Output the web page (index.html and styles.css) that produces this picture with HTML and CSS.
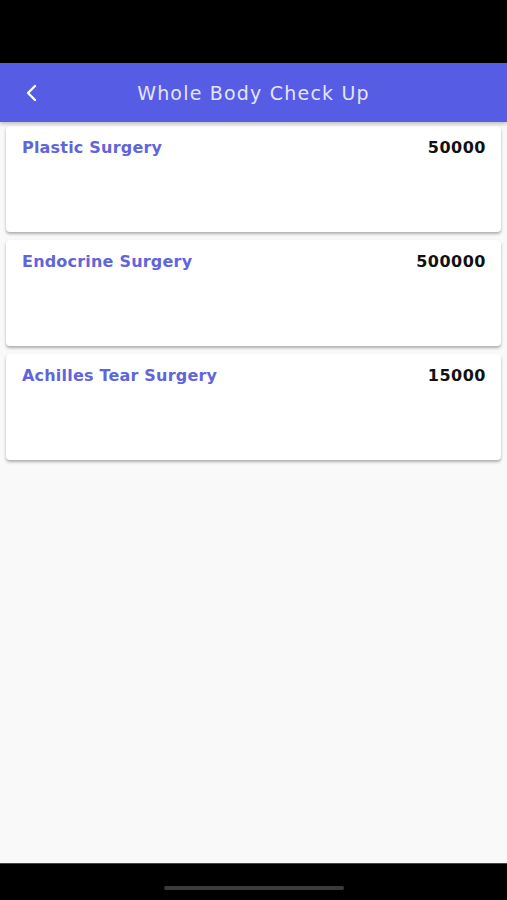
FILE: index.html
```html
<!DOCTYPE html>
<html lang="en">
  <head>
    <meta charset="UTF-8" />
    <meta name="viewport" content="width=device-width, initial-scale=1.0" />
    <title>Whole Body Check Up</title>
    <link rel="stylesheet" href="styles.css">
  </head>
  <body>
    <div class="statusBar"></div>
    <div class="appBar">
      <svg class="backIcon" width="14" height="18" viewBox="0 0 14 18">
        <path d="M10 2 L3 9 L10 16" fill="none" stroke="#ffffff" stroke-width="2.4" stroke-linecap="round" stroke-linejoin="round" />
      </svg>
      <div class="title">Whole Body Check Up</div>
    </div>
    <div class="list">
      <div class="card">
        <div class="name">Plastic Surgery</div>
        <div class="price">50000</div>
      </div>
      <div class="card">
        <div class="name">Endocrine Surgery</div>
        <div class="price">500000</div>
      </div>
      <div class="card">
        <div class="name">Achilles Tear Surgery</div>
        <div class="price">15000</div>
      </div>
    </div>
    <div class="navBar">
      <div class="homeIndicator"></div>
    </div>
  </body>
</html>
```

FILE: styles.css
```css
body {
  margin: 0;
  height: 900px;
  display: flex;
  flex-direction: column;
  background-color: #f9f9f9;
  font-family: "DejaVu Sans", sans-serif;
}
.statusBar {
  height: 63px;
  background-color: #000000;
}
.appBar {
  height: 59px;
  background-color: #575ce5;
  display: flex;
  align-items: center;
  position: relative;
  box-shadow: 0 2px 4px rgba(0, 0, 0, 0.25);
}
.backIcon {
  margin-left: 25px;
}
.title {
  position: absolute;
  left: 0;
  right: 0;
  text-align: center;
  color: #e4e4ff;
  font-size: 19px;
  font-weight: normal;
  letter-spacing: 1.2px;
}
.list {
  flex: 1;
  padding: 4px 6px 0 6px;
  display: flex;
  flex-direction: column;
  gap: 8px;
}
.card {
  height: 106px;
  background-color: #ffffff;
  border-radius: 4px;
  box-shadow: 0 2px 3px rgba(0, 0, 0, 0.3);
  display: flex;
  justify-content: space-between;
  align-items: flex-start;
  padding: 12px 15px 0 16px;
  box-sizing: border-box;
}
.name {
  color: #6065dc;
  font-size: 16px;
  font-weight: bold;
  letter-spacing: 0.2px;
}
.price {
  color: #111111;
  font-size: 16px;
  font-weight: bold;
  letter-spacing: 0.5px;
}
.navBar {
  height: 36px;
  background-color: #000000;
  border-top: 1px solid #444444;
  display: flex;
  justify-content: center;
  align-items: flex-start;
}
.homeIndicator {
  margin-top: 22px;
  width: 180px;
  height: 4px;
  border-radius: 2px;
  background-color: #3a3a3a;
}
```
